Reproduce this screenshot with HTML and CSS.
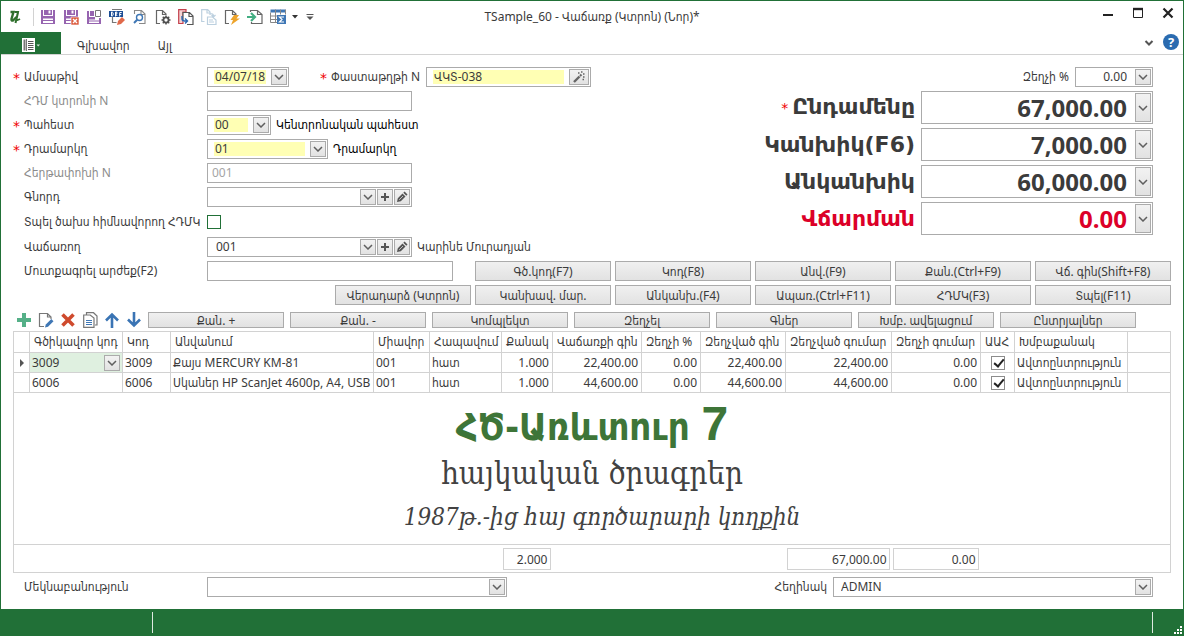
FILE: index.html
```html
<!DOCTYPE html>
<html lang="hy">
<head>
<meta charset="utf-8">
<title>TSample_60 - Վաճառք (Կտրոն) (Նոր)*</title>
<link rel="stylesheet" href="styles.css">
</head>
<body>
<svg class="defs" aria-hidden="true">
  <symbol id="chev" viewBox="0 0 10 6"><path d="M1 1l4 4 4-4" fill="none" stroke="#5f5f5f" stroke-width="1.500"/></symbol>
  <symbol id="plus" viewBox="0 0 10 10"><path d="M5 1v8M1 5h8" stroke="#555" stroke-width="2"/></symbol>
  <symbol id="pen" viewBox="0 0 12 12"><path d="M1 11l.8-3.800L6.500 2.500 9.500 5.500 4.800 10.200zM7.300 1.700L8.600.5 11.500 3.400l-1.200 1.300z" fill="#555"/><path d="M3.200 8.800L7 5" stroke="#ddd" stroke-width=".8"/></symbol>
  <symbol id="wand" viewBox="0 0 12 12"><path d="M1 11l5.500-5.500" stroke="#666" stroke-width="2.400"/><path d="M7 5l1.500-1.500" stroke="#666" stroke-width="2"/><path d="M5 2h1.500M8 1h1.500M10 3h1.500M10 6h1.500M9.500 8.500H11" stroke="#666" stroke-width="1.400"/></symbol>
  <symbol id="floppy" viewBox="0 0 16 16"><path d="M1 1h2v6h10V1h2v14H1z" fill="#9664b0"/><path d="M4 1h8v5H4z" fill="#9664b0"/><path d="M8.500 1.500h2v3h-2z" fill="#fff"/><path d="M3 9.500h10V14H3z" fill="#fff"/><path d="M3 11.500h10" stroke="#9664b0"/></symbol>
</svg>
<div class="window">
  <header class="titlebar">
    <div class="quick">
      <svg class="logo" viewBox="0 0 14 16"><path d="M2.500 3h3L3.500 10q-.3 2 1.500 1.500L8.500 8" fill="none" stroke="#2f6f2c" stroke-width="2.400"/><path d="M6.500 3H10L7.500 14M10 3.500L8.500 10q0 2 3.500 0" fill="none" stroke="#2f6f2c" stroke-width="2"/></svg>
      <span class="sep"></span>
      <div class="icons">
        <button class="ico" aria-label="Save"><svg viewBox="0 0 16 16"><use href="#floppy"/></svg></button>
        <button class="ico" aria-label="Save and close"><svg viewBox="0 0 16 16"><use href="#floppy"/><path d="M8 8h8v8H8z" fill="#dc5f42" stroke="#fff" stroke-width=".6"/><path d="M10 10l4 4M14 10l-4 4" stroke="#fff" stroke-width="1.400"/></svg></button>
        <button class="ico" aria-label="Save and new"><svg viewBox="0 0 16 16"><path d="M1 2h2v6h6v3h4V9h2v6H1z" fill="#9664b0"/><path d="M4 2h4v5H4z" fill="#9664b0"/><path d="M3 10.500h10V14H3z" fill="#fff"/><path d="M3 12h10" stroke="#9664b0"/><path d="M9.500 1.500h5v6h-5z" fill="#fff" stroke="#777"/></svg></button>
        <button class="ico" aria-label="Draft"><svg viewBox="0 0 16 16"><path d="M3.500 8v5.500h4M13.500 7.500V6M3 .5h10" fill="none" stroke="#777" stroke-width="1.200"/><path d="M0 2h14v6H0z" fill="#1c4d94"/><path d="M2.500 3v4h.7q1-.4 1-2t-1-2zM6.500 7.500V3h1.300v2H6.500l1.700 2M10.700 7.500V3.500h2M10.700 5.500h1.600" fill="none" stroke="#fff"/><path d="M8 16l1-4 4-4 3 3-4 4z" fill="#e0694a"/></svg></button>
        <button class="ico" aria-label="Preview"><svg viewBox="0 0 16 16"><path d="M2.500 5V1.500h7L13 5v9.500H7M9 1.500v4h4" fill="none" stroke="#888" stroke-width="1.100"/><circle cx="7.500" cy="8.500" r="3" fill="#fff" stroke="#3f77b5" stroke-width="1.400"/><path d="M5.200 10.800L2 14" stroke="#3f77b5" stroke-width="2"/></svg></button>
        <button class="ico" aria-label="Document settings"><svg viewBox="0 0 16 16"><path d="M5 14.500H1.500V1.500h6L11 5v1M7.500 1.500v4H11" fill="none" stroke="#666" stroke-width="1.200"/><circle cx="11" cy="11" r="2.600" fill="none" stroke="#505050" stroke-width="1.800"/><path d="M11 6.500v2M11 13.500v2M6.500 11h2M13.500 11h2M7.800 7.800l1.400 1.400M12.800 12.800l1.400 1.400M14.200 7.800l-1.400 1.400M9.200 12.800l-1.400 1.400" stroke="#505050" stroke-width="1.500"/></svg></button>
        <button class="ico" aria-label="Create from"><svg viewBox="0 0 16 16"><path d="M5 14.500H.7V.7H8V3H5z" fill="#f4d4d4" stroke="#c33f4c" stroke-width="1.200"/><path d="M5 12V3.500h6.500L15 7v8.500H9M11 3.500v4h4" fill="#fff" stroke="#555" stroke-width="1.200"/><path d="M4 7v2.500q0 2.500 2.500 2.500H9M7 9.500L9.500 12 7 14.500" fill="none" stroke="#2c68b0" stroke-width="1.400"/></svg></button>
        <button class="ico" aria-label="Copy" disabled><svg viewBox="0 0 16 16"><path d="M3.500 12.500H.7V.7h6L9 3v3M6 .7V4h3M9.500 4.500q3 0 3 2.500v1M10.500 6l2 2 2-2M6.500 8h5l3.500 3v4.500H6.500zM8 11h4M8 13h5" fill="none" stroke="#bcd0df" stroke-width="1.200"/></svg></button>
        <button class="ico" aria-label="Actions"><svg viewBox="0 0 16 16"><path d="M5 14.500H1.500V1.500h7L12 5v1M8.500 1.500v4H12" fill="none" stroke="#666" stroke-width="1.200"/><path d="M10 6h5l-2.500 3.500H16L7 16l2-5H6.500z" fill="#eda42c"/></svg></button>
        <button class="ico" aria-label="Import"><svg viewBox="0 0 16 16"><path d="M3.500 3V1.500h7L15 5.500v9H4.500V13M10.500 1.500v4H15" fill="none" stroke="#666" stroke-width="1.200"/><path d="M0 8h7M4 4l4 4-4 4" fill="none" stroke="#43ae82" stroke-width="2.200"/></svg></button>
        <button class="ico" aria-label="Totals"><svg viewBox="0 0 16 16"><path d="M.5.500h15v3H.5z" fill="#3f77b5"/><path d="M.5 3.500v10h7M.5 7h7M.5 10.500h7M5.500.5v13M10.500.5v5M15.500.5v5" fill="none" stroke="#888"/><path d="M7 6h9v9H7z" fill="#3f77b5"/><path d="M14 8H9.500l2.500 2.500L9.500 13H14" fill="none" stroke="#fff" stroke-width="1.200"/></svg></button>
      </div>
      <svg class="caret" viewBox="0 0 6 4"><path d="M0 0h6L3 3.500z" fill="#333"/></svg>
      <svg class="more" viewBox="0 0 8 8"><path d="M.5 1.500h7" stroke="#555"/><path d="M.5 3.500h7L4 7z" fill="#555"/></svg>
    </div>
    <h1 class="title">TSample_60 - Վաճառք (Կտրոն) (Նոր)*</h1>
    <div class="winbtns">
      <button class="wb" aria-label="Minimize"><svg viewBox="0 0 12 12"><path d="M1 8h10" stroke="#222" stroke-width="2"/></svg></button>
      <button class="wb" aria-label="Maximize"><svg viewBox="0 0 12 12"><path d="M1.500 1.500h9v9h-9z" fill="none" stroke="#222"/><path d="M1 2h10" stroke="#222" stroke-width="2.400"/></svg></button>
      <button class="wb" aria-label="Close"><svg viewBox="0 0 12 12"><path d="M1.500 1.500l9 9M10.500 1.500l-9 9" stroke="#222" stroke-width="2.200"/></svg></button>
    </div>
  </header>
  <nav class="ribbon">
    <button class="filetab" aria-label="Menu">
      <svg class="fileico" viewBox="0 0 18 14"><path d="M0 0h13v14H0z" fill="#fff"/><path d="M1.500 1.500h2v11h-2z" fill="#777"/><path d="M4.500 1v12" stroke="#777"/><path d="M6 3.500h5.500M6 5.500h5.500M6 7.500h5.500M6 9.500h5.500M6 11.500h5.500" stroke="#555"/><path d="M14.500 6.500H18l-1.800 2z" fill="#cfe0d3"/></svg>
    </button>
    <button class="tab">Գլխավոր</button>
    <button class="tab">Այլ</button>
    <span class="grow"></span>
    <button class="collapse" aria-label="Collapse"><svg class="chevi" viewBox="0 0 10 6"><path d="M1.500 1L5 4.500 8.500 1" fill="none" stroke="#555" stroke-width="2"/></svg></button>
    <button class="help" aria-label="Help">?</button>
  </nav>

  <main class="content">
    <div class="top">
      <div class="form">
        <div class="row">
          <label class="lab req" for="date">Ամսաթիվ</label>
          <div class="field w-date"><input class="hl" id="date" value="04/07/18"><button class="sq" aria-label="Open calendar"><svg class="chevi"><use href="#chev"/></svg></button></div>
          <label class="lab2 req" for="doc">Փաստաթղթի N</label>
          <div class="field w-doc"><input class="hl" id="doc" value="ՎԿՏ-038"><button class="sq wide" aria-label="Generate"><svg class="peni"><use href="#wand"/></svg></button></div>
        </div>
        <div class="row"><label class="lab dim" for="hdm">ՀԴՄ կտրոնի N</label><div class="field w-mid"><input id="hdm"></div></div>
        <div class="row"><label class="lab req" for="store">Պահեստ</label><div class="field w-store"><input class="hl" id="store" value="00"><button class="sq" aria-label="Choose"><svg class="chevi"><use href="#chev"/></svg></button></div><span class="desc">Կենտրոնական պահեստ</span></div>
        <div class="row"><label class="lab req" for="cash">Դրամարկղ</label><div class="field w-cash"><input class="hl" id="cash" value="01"><button class="sq" aria-label="Choose"><svg class="chevi"><use href="#chev"/></svg></button></div><span class="desc">Դրամարկղ</span></div>
        <div class="row"><label class="lab dim" for="shift">Հերթափոխի N</label><div class="field w-mid"><input class="flat" id="shift" value="001" disabled></div></div>
        <div class="row"><label class="lab" for="buyer">Գնորդ</label><div class="field w-mid"><input id="buyer"><button class="sq" aria-label="Choose"><svg class="chevi"><use href="#chev"/></svg></button><button class="sq" aria-label="Add"><svg class="plusi"><use href="#plus"/></svg></button><button class="sq" aria-label="Edit"><svg class="peni"><use href="#pen"/></svg></button></div></div>
        <div class="row tall"><label class="lab" for="print">Տպել ծախս հիմնավորող ՀԴՄԿ</label><input type="checkbox" class="box" id="print"></div>
        <div class="row"><label class="lab" for="seller">Վաճառող</label><div class="field w-mid"><input id="seller" value="001"><button class="sq" aria-label="Choose"><svg class="chevi"><use href="#chev"/></svg></button><button class="sq" aria-label="Add"><svg class="plusi"><use href="#plus"/></svg></button><button class="sq" aria-label="Edit"><svg class="peni"><use href="#pen"/></svg></button></div><span class="desc soft">Կարինե Մուրադյան</span></div>
      </div>
      <div class="totals">
        <div class="trow"><label for="disc">Զեղչի %</label><div class="field w-disc"><input class="num" id="disc" value="0.00"><button class="sq" aria-label="Calculator"><svg class="chevi"><use href="#chev"/></svg></button></div></div>
        <div class="trow big"><label for="t1"><span class="star">*</span>Ընդամենը</label><div class="field"><input class="num" id="t1" value="67,000.00"><button class="sq" aria-label="Calculator"><svg class="chevi"><use href="#chev"/></svg></button></div></div>
        <div class="trow big"><label for="t2">Կանխիկ(F6)</label><div class="field"><input class="num" id="t2" value="7,000.00"><button class="sq" aria-label="Calculator"><svg class="chevi"><use href="#chev"/></svg></button></div></div>
        <div class="trow big"><label for="t3">Անկանխիկ</label><div class="field"><input class="num" id="t3" value="60,000.00"><button class="sq" aria-label="Calculator"><svg class="chevi"><use href="#chev"/></svg></button></div></div>
        <div class="trow big due"><label for="t4">Վճարման</label><div class="field"><input class="num" id="t4" value="0.00"><button class="sq" aria-label="Calculator"><svg class="chevi"><use href="#chev"/></svg></button></div></div>
      </div>
    </div>

    <div class="row actions">
      <label class="lab" for="f2">Մուտքագրել արժեք(F2)</label><div class="field w-f2"><input id="f2"></div>
      <span class="grow"></span>
      <button class="btn">Գծ.կոդ(F7)</button><button class="btn">Կոդ(F8)</button><button class="btn">Անվ.(F9)</button><button class="btn">Քան.(Ctrl+F9)</button><button class="btn">Վճ. գին(Shift+F8)</button>
    </div>
    <div class="row actions">
      <span class="grow"></span>
      <button class="btn">Վերադարձ (Կտրոն)</button><button class="btn">Կանխավ. մար.</button><button class="btn">Անկանխ.(F4)</button><button class="btn">Ապառ.(Ctrl+F11)</button><button class="btn">ՀԴՄԿ(F3)</button><button class="btn">Տպել(F11)</button>
    </div>

    <div class="tools">
      <div class="toolicons">
        <button class="ico" aria-label="Add row"><svg viewBox="0 0 16 16"><path d="M8 1v14M1 8h14" stroke="#55b088" stroke-width="4"/></svg></button>
        <button class="ico" aria-label="Edit row"><svg viewBox="0 0 16 16"><path d="M6 14.500H1.500V1.500h8L13 5v2M9.500 1.500v3.500H13" fill="none" stroke="#777" stroke-width="1.200"/><path d="M7 15.500l.8-3 5.500-5.500 2.200 2.200L10 14.700z" fill="#3f77b5"/></svg></button>
        <button class="ico" aria-label="Delete row"><svg viewBox="0 0 16 16"><path d="M2.500 2.500l11 11M13.500 2.500l-11 11" stroke="#cf4a2d" stroke-width="3.600"/></svg></button>
        <button class="ico" aria-label="Copy row"><svg viewBox="0 0 16 16"><path d="M4.500 3V.7h7L15 4v9h-2" fill="none" stroke="#777" stroke-width="1.200"/><path d="M1.700 3h6.500L12 6v9.300H1.700z" fill="#fff" stroke="#777" stroke-width="1.200"/><path d="M4 8.500h6M4 10.500h6M4 12.500h6" stroke="#3f77b5"/></svg></button>
        <button class="ico" aria-label="Move up"><svg viewBox="0 0 16 16"><path d="M8 16V2.500M2 8.500l6-6 6 6" fill="none" stroke="#3a74b4" stroke-width="2.600"/></svg></button>
        <button class="ico" aria-label="Move down"><svg viewBox="0 0 16 16"><path d="M8 0v13.500M2 7.500l6 6 6-6" fill="none" stroke="#3a74b4" stroke-width="2.600"/></svg></button>
      </div>
      <button class="btn">Քան. +</button><button class="btn">Քան. -</button><button class="btn">Կոմպլեկտ</button><button class="btn">Զեղչել</button><button class="btn">Գներ</button><button class="btn">Խմբ. ավելացում</button><button class="btn">Ընտրյալներ</button>
    </div>

    <table class="grid">
      <colgroup><col class="c16"><col class="c93"><col class="c48"><col class="c203"><col class="c56"><col class="c72"><col class="c51"><col class="c89"><col class="c59"><col class="c85"><col class="c106"><col class="c89"><col class="c34"><col class="c113"><col></colgroup>
      <thead>
        <tr><th></th><th>Գծիկավոր կոդ</th><th>Կոդ</th><th>Անվանում</th><th>Միավոր</th><th>Հապավում</th><th>Քանակ</th><th>Վաճառքի գին</th><th>Զեղչի %</th><th>Զեղչված գին</th><th>Զեղչված գումար</th><th>Զեղչի գումար</th><th>ԱԱՀ</th><th>Խմբաքանակ</th><th></th></tr>
      </thead>
      <tbody>
        <tr><td class="mark"><svg class="tri" viewBox="0 0 4 8"><path d="M0 0l4 4-4 4z" fill="#555"/></svg></td><td class="active"><div class="cellbox"><input aria-label="Գծիկավոր կոդ" value="3009"><button class="sq" aria-label="Choose"><svg class="chevi"><use href="#chev"/></svg></button></div></td><td>3009</td><td>Քայս MERCURY KM-81</td><td>001</td><td>հատ</td><td class="r">1.000</td><td class="r">22,400.00</td><td class="r">0.00</td><td class="r">22,400.00</td><td class="r">22,400.00</td><td class="r">0.00</td><td class="mark"><input type="checkbox" class="tick" aria-label="ԱԱՀ" checked></td><td>Ավտոընտրություն</td><td></td></tr>
        <tr><td></td><td>6006</td><td>6006</td><td>Սկաներ HP ScanJet 4600p, A4, USB</td><td>001</td><td>հատ</td><td class="r">1.000</td><td class="r">44,600.00</td><td class="r">0.00</td><td class="r">44,600.00</td><td class="r">44,600.00</td><td class="r">0.00</td><td class="mark"><input type="checkbox" class="tick" aria-label="ԱԱՀ" checked></td><td>Ավտոընտրություն</td><td></td></tr>
        <tr class="banner"><td colspan="15">
          <p class="b1">ՀԾ-Առևտուր <span class="seven">7</span></p>
          <p class="b2">հայկական ծրագրեր</p>
          <p class="b3">1987թ.-ից հայ գործարարի կողքին</p>
        </td></tr>
      </tbody>
      <tfoot>
        <tr><td colspan="6"></td><td><div class="sum">2.000</div></td><td colspan="3"></td><td><div class="sum">67,000.00</div></td><td><div class="sum">0.00</div></td><td colspan="3"></td></tr>
      </tfoot>
    </table>

    <div class="row bottom">
      <label class="lab" for="note">Մեկնաբանություն</label>
      <div class="combo w-note"><select id="note"><option></option></select><span class="sq"><svg class="chevi"><use href="#chev"/></svg></span></div>
      <span class="grow"></span>
      <label for="author">Հեղինակ</label>
      <div class="combo w-author"><select id="author"><option>ADMIN</option></select><span class="sq"><svg class="chevi"><use href="#chev"/></svg></span></div>
    </div>
  </main>
  <footer class="status"><span class="cell first"></span><span class="cell grow"></span><svg class="grip" viewBox="0 0 8 8"><path d="M6 0h2v2H6zM6 3h2v2H6zM6 6h2v2H6zM3 3h2v2H3zM3 6h2v2H3zM0 6h2v2H0z" fill="#fff"/></svg></footer>
</div>
</body>
</html>
```
FILE: styles.css
```css
* { box-sizing: border-box; }
body {
  margin: 0;
  font: 12px/16px "Noto Sans", "DejaVu Sans Condensed", "DejaVu Sans", sans-serif;
  color: #3b3b3b;
  background: #fff;
}
button, input, select { font: inherit; color: inherit; margin: 0; padding: 0; border: 0; background: none; border-radius: 0; }
input, select { min-width: 0; outline: 0; }
svg { display: block; }
.defs { display: none; }
.grow { flex: 1; }

.window { min-height: 100vh; display: flex; flex-direction: column; border: 1px solid #217037; border-bottom: 0; }

/* title bar */
.titlebar { display: grid; grid-template-columns: 1fr auto 1fr; height: 31px; align-items: center; }
.quick { display: flex; align-items: center; padding-left: 7px; }
.logo { width: 14px; height: 16px; }
.sep { width: 1px; height: 18px; background: #d2d2d2; margin: 0 6px 0 11px; }
.icons { display: flex; gap: 7px; }
.ico { width: 16px; height: 16px; flex: none; }
.ico svg { width: 16px; height: 16px; }
.caret { width: 6px; height: 4px; margin-left: 6px; }
.more { width: 8px; height: 8px; margin-left: 8px; }
.title { margin: 0; font-size: 12px; font-weight: 400; }
.winbtns { display: flex; justify-content: flex-end; gap: 18px; padding: 0 9px 8px 0; }
.wb, .wb svg { width: 12px; height: 12px; }

/* ribbon */
.ribbon { display: flex; align-items: center; height: 23px; border-bottom: 1px solid #d2d2d2; padding-right: 4px; }
.filetab { width: 60px; height: 22px; background: #217037; display: flex; justify-content: center; align-items: center; padding-top: 4px; margin-right: 16px; }
.fileico { width: 18px; height: 14px; }
.tab { margin-right: 28px; padding-top: 6px; }
.collapse { margin-right: 9px; }
.help { width: 16px; height: 16px; margin-bottom: 2px; border-radius: 50%; background: #2a6bb0; color: #fff; font-weight: 700; font-size: 13px; line-height: 16px; }

/* form */
.content { flex: 1; display: flex; flex-direction: column; padding: 12px; }
.top { display: flex; justify-content: space-between; margin-bottom: 4px; }
.form { display: flex; flex-direction: column; gap: 4px; }
.row { display: flex; align-items: center; height: 20px; }
.tall { height: 22px; }
.lab { width: 194px; padding-left: 11px; white-space: nowrap; flex: none; }
.dim { color: #8b8b8b; }
.req::before { content: "*"; color: #f00000; font: 14px/12px "DejaVu Sans", sans-serif; display: inline-block; width: 11px; text-align: left; vertical-align: -2px; }
.lab.req { padding-left: 0; }
.lab2 { width: 137px; padding-right: 6px; text-align: right; }
.desc { color: #000; padding-left: 5px; }
.soft { color: #3b3b3b; }

.field, .combo { border: 1px solid #ababab; background: #fff; height: 20px; flex: none; }
.field { display: flex; align-items: center; gap: 1px; padding: 1px; }
.field input { flex: 1; height: 14px; padding-left: 7px; }
.field .hl { background: #ffffb4; margin: 0 4px 0 5px; padding-left: 1px; }
.field .flat { padding-left: 3px; color: #a5a5a5; }
.field .num { text-align: right; padding-right: 7px; }
.w-date { width: 82px; }
.w-doc { width: 165px; }
.w-mid { width: 205px; }
.w-store { width: 64px; }
.w-cash { width: 121px; }
.w-disc { width: 78px; }
.w-f2 { width: 246px; }

.sq { width: 16px; height: 16px; flex: none; border: 1px solid #ababab; background: linear-gradient(#f2f2f2, #e2e2e2); display: flex; align-items: center; justify-content: center; }
.wide { width: 20px; }
.chevi { width: 10px; height: 6px; }
.plusi { width: 10px; height: 10px; }
.peni { width: 12px; height: 12px; }

.box { appearance: none; width: 14px; height: 14px; border: 1px solid #217037; }

/* totals */
.totals { display: flex; flex-direction: column; align-items: flex-end; gap: 4px; padding-right: 18px; }
.trow { display: flex; align-items: center; gap: 6px; }
.big { font-size: 24px; font-weight: 700; }
.big label { font: 700 22px/32px "DejaVu Sans", sans-serif; }
.big .field { width: 232px; height: 33px; }
.big .field input { height: 29px; width: 100px; }
.big .sq { height: 29px; }
.star { color: #f00000; font-size: 14px; font-weight: 400; margin-right: 4px; vertical-align: 1px; }
.due { color: #dc0028; }

/* buttons */
.actions { gap: 4px; margin-bottom: 4px; }
.actions .lab { margin-right: -4px; }
.btn { width: 136px; height: 20px; border: 1px solid #ababab; background: linear-gradient(#f0f0f0, #e2e2e2); white-space: nowrap; padding-top: 1px; line-height: 16px; }
.tools { display: flex; align-items: center; gap: 6px; padding: 3px 0 3px 3px; }
.tools .btn { height: 16px; line-height: 12px; }
.toolicons { display: flex; gap: 6px; width: 126px; }

/* grid */
.grid { width: 100%; flex: 1; border-collapse: collapse; table-layout: fixed; border: 1px solid #d2d2d2; white-space: nowrap; }
.grid th, .grid td { border: 1px solid #d2d2d2; padding: 0 2px; overflow: hidden; text-align: left; font-weight: 400; }
.grid th { height: 21px; padding: 0 4px; }
.grid td { height: 20px; }
.grid td.r { text-align: right; padding-right: 3px; }
.grid .mark { padding: 0; text-align: center; }
.grid .active { background: #dff0e0; }
.cellbox { display: flex; align-items: center; }
.cellbox input { flex: 1; }
.tri { width: 4px; height: 8px; margin: 0 auto; }
.tick { appearance: none; display: block; width: 14px; height: 14px; margin: 0 auto; border: 1px solid #8c8c8c; }
.tick::before { content: ""; display: block; width: 4px; height: 8px; margin: 0 0 0 4px; border: solid #222; border-width: 0 2px 2px 0; transform: rotate(40deg); }
.c16 { width: 16px; }
.c34 { width: 34px; }
.c48 { width: 48px; }
.c51 { width: 51px; }
.c56 { width: 56px; }
.c59 { width: 59px; }
.c72 { width: 72px; }
.c85 { width: 85px; }
.c89 { width: 89px; }
.c93 { width: 93px; }
.c106 { width: 106px; }
.c113 { width: 113px; }
.c203 { width: 203px; }
.grid .banner td { height: 152px; text-align: center; padding: 4px 0 0; color: #424242; }
.banner p { margin: 0; }
.b1 { font: 700 38px/52px "DejaVu Sans Condensed", "DejaVu Sans", sans-serif; color: #3e7538; }
.seven { font: 700 48px/48px "Liberation Sans", sans-serif; }
.b2 { font: 31px/40px "DejaVu Serif Condensed", "DejaVu Serif", serif; }
.b3 { font: italic 24px/48px "DejaVu Serif Condensed", "DejaVu Serif", serif; padding-left: 20px; }
.grid tfoot td { height: 28px; border-width: 1px 0; padding: 0 2px 0 1px; }
.sum { height: 22px; line-height: 22px; border: 1px solid #d2d2d2; padding-right: 2px; text-align: right; }

/* author and notes */
.bottom { margin-top: 4px; padding-right: 18px; }
.combo { display: grid; }
.combo select { grid-area: 1 / 1; appearance: none; padding-left: 7px; }
.combo .sq { grid-area: 1 / 1; justify-self: end; align-self: center; margin-right: 1px; pointer-events: none; }
.w-note { width: 300px; }
.w-author { width: 320px; margin-left: 6px; }

/* status bar */
.status { display: flex; align-items: center; height: 27px; background: #217037; }
.cell { height: 21px; border-right: 1px solid #dfe9e1; }
.first { width: 152px; }
.grip { width: 8px; height: 8px; margin: 14px 1px 0 21px; }
```
